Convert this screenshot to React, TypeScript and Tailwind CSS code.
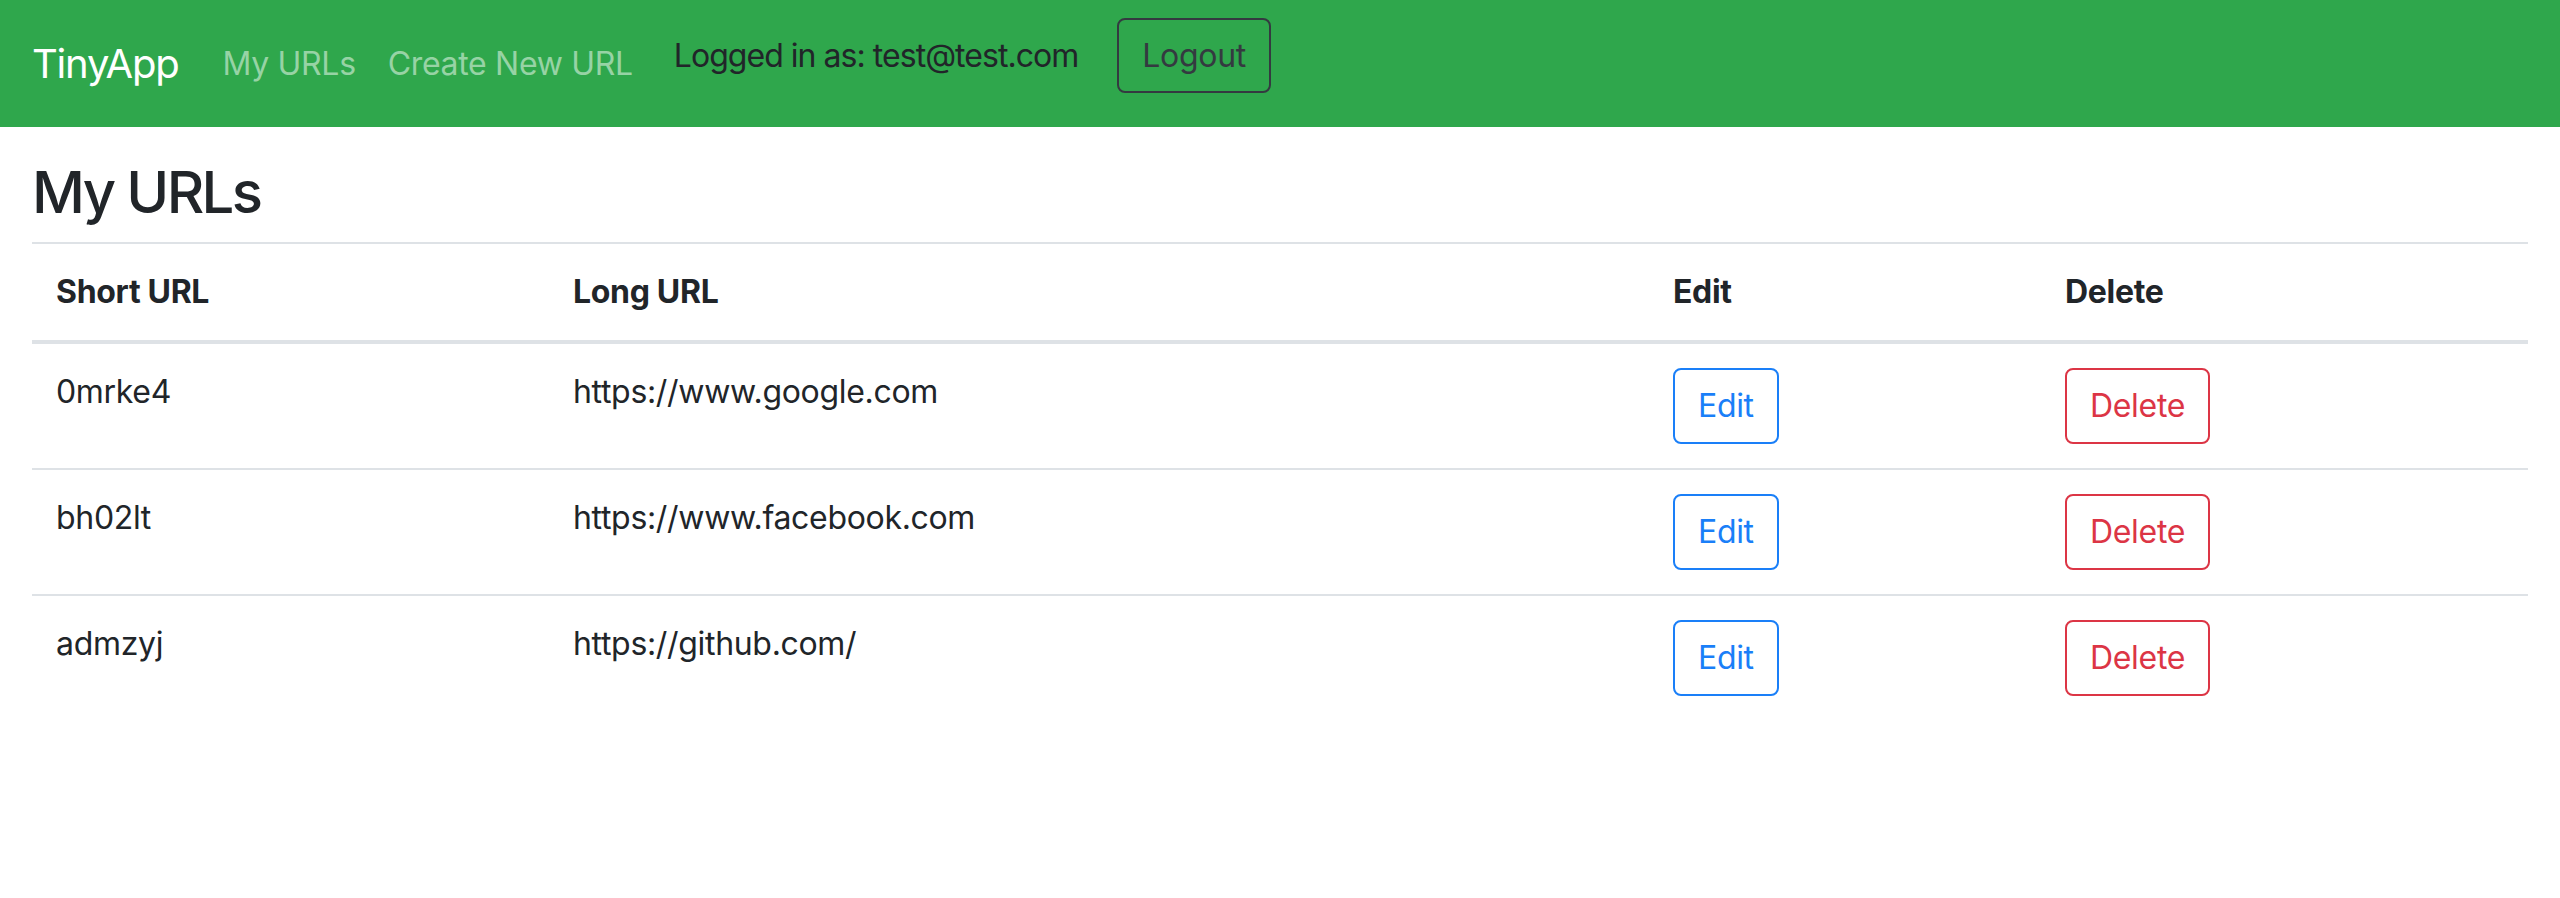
const FONT = { fontFamily: 'Inter, "Noto Sans", "Liberation Sans", sans-serif' };

const urls = [
  { short: '0mrke4', long: 'https://www.google.com' },
  { short: 'bh02lt', long: 'https://www.facebook.com' },
  { short: 'admzyj', long: 'https://github.com/' },
];

function Navbar() {
  return (
    <nav className="flex h-[127px] items-center bg-[#2fa74c] px-[32px]">
      <a className="mr-[28px] text-[40px] leading-[60px] tracking-[-0.03em] text-white" href="#">
        TinyApp
      </a>
      <a className="px-[16px] text-[32px] leading-[48px] text-[#97d3a5]" href="#">
        My URLs
      </a>
      <a className="px-[16px] text-[32px] leading-[48px] text-[#97d3a5]" href="#">
        Create New URL
      </a>
      <div className="ml-[25px] flex items-center self-start pt-[18px]">
        <span className="text-[32px] leading-[48px] tracking-[-0.03em] text-[#212529]">
          Logged in as: test@test.com
        </span>
        <button className="ml-[39px] h-[75px] rounded-[8px] border-2 border-[#343a40] px-[23px] text-[32px] leading-[48px] text-[#343a40]">
          Logout
        </button>
      </div>
    </nav>
  );
}

function OutlineButton({ label, tone }: { label: string; tone: 'blue' | 'red' }) {
  const cls =
    tone === 'blue'
      ? 'border-[#1a7ff8] text-[#1a7ff8]'
      : 'border-[#dc3545] text-[#dc3545]';
  return (
    <button
      className={`h-[76px] rounded-[8px] border-2 px-[23px] text-[32px] leading-[48px] ${cls}`}
    >
      {label}
    </button>
  );
}

export default function App() {
  return (
    <div className="min-h-[898px] bg-white tracking-[-0.02em] text-[#212529]" style={FONT}>
      <Navbar />
      <main className="px-[32px]">
        <h2 className="mt-[28px] mb-[12px] text-[58px] font-medium leading-[75px] tracking-[-0.045em]">
          My URLs
        </h2>
        <table className="w-full table-fixed border-collapse text-[32px] leading-[48px]">
          <colgroup>
            <col className="w-[517px]" />
            <col className="w-[1100px]" />
            <col className="w-[392px]" />
            <col />
          </colgroup>
          <thead>
            <tr>
              <th className="border-t-2 border-b-4 border-[#dee2e6] p-[24px] text-left font-bold">Short URL</th>
              <th className="border-t-2 border-b-4 border-[#dee2e6] p-[24px] text-left font-bold">Long URL</th>
              <th className="border-t-2 border-b-4 border-[#dee2e6] p-[24px] text-left font-bold">Edit</th>
              <th className="border-t-2 border-b-4 border-[#dee2e6] p-[24px] text-left font-bold">Delete</th>
            </tr>
          </thead>
          <tbody>
            {urls.map((u) => (
              <tr key={u.short} className="border-t-2 border-[#dee2e6]">
                <td className="p-[24px] align-top">{u.short}</td>
                <td className="p-[24px] align-top">{u.long}</td>
                <td className="p-[24px] align-top">
                  <OutlineButton label="Edit" tone="blue" />
                </td>
                <td className="p-[24px] align-top">
                  <OutlineButton label="Delete" tone="red" />
                </td>
              </tr>
            ))}
          </tbody>
        </table>
      </main>
    </div>
  );
}
